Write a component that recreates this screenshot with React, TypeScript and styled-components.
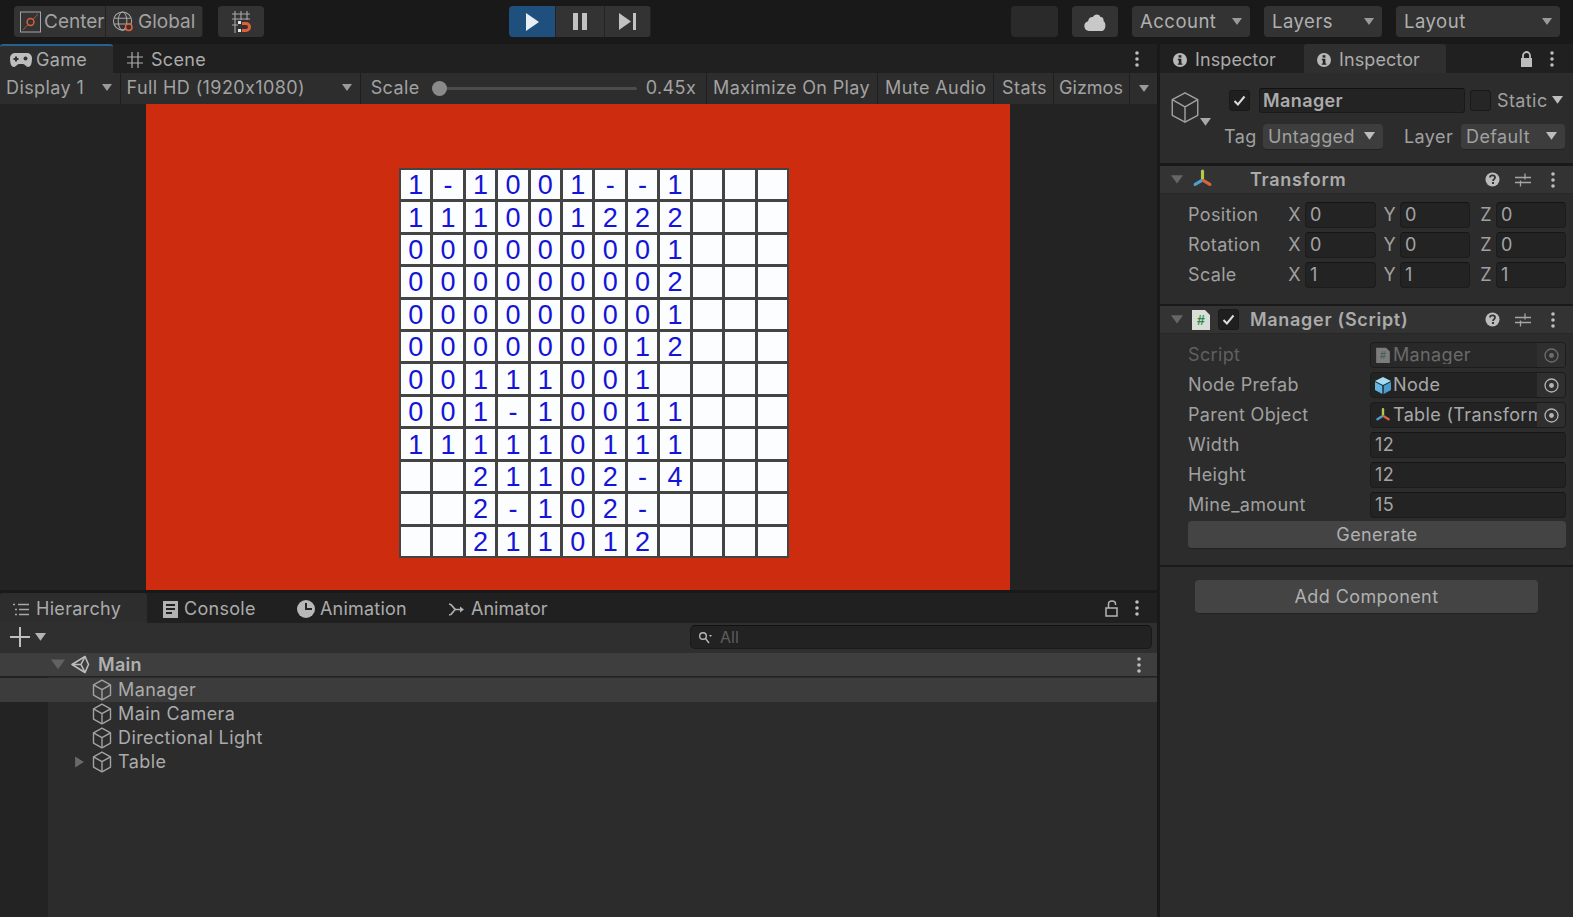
import { ReactNode } from "react";
import styled, { createGlobalStyle } from "styled-components";

const GlobalStyle = createGlobalStyle`
  html, body {
    margin: 0;
    background: #191919;
    overflow: hidden;
  }
  * {
    box-sizing: border-box;
  }
`;

const BOARD = [
  "1-1001--1",
  "111001222",
  "000000001",
  "000000002",
  "000000001",
  "000000012",
  "00111001 ",
  "001-10011",
  "111110111",
  "  21102-4",
  "  2-102- ",
  "  2110 12".replace(" 12", "12"),
];

const TREE = [
  { name: "Manager", selected: true },
  { name: "Main Camera" },
  { name: "Directional Light" },
  { name: "Table", expandable: true },
];

function Arrow({ size = 10, color = "#9a9a9a", dir = "down" }: { size?: number; color?: string; dir?: "down" | "right" }) {
  const d = dir === "down" ? "M0 1h10L5 8z" : "M1 0l8 5-8 5z";
  return (
    <svg width={size} height={size} viewBox="0 0 10 10">
      <path d={d} fill={color} />
    </svg>
  );
}

function Cube({ size = 20, color = "#a2a2a2" }: { size?: number; color?: string }) {
  return (
    <svg width={size} height={size * 1.1} viewBox="0 0 20 22" fill="none" stroke={color} strokeWidth={(1.4 * 20) / size} strokeLinejoin="round">
      <path d="M10 1.200l8.500 4.600v10.400L10 20.800l-8.500-4.600V5.800z" />
      <path d="M1.500 5.800L10 10.600l8.500-4.800M10 10.600v10.200" />
    </svg>
  );
}

function Dots({ color = "#bdbdbd" }: { color?: string }) {
  return (
    <svg width="4" height="16" viewBox="0 0 4 16">
      <circle cx="2" cy="2" r="1.800" fill={color} />
      <circle cx="2" cy="8" r="1.800" fill={color} />
      <circle cx="2" cy="14" r="1.800" fill={color} />
    </svg>
  );
}

function InfoIcon() {
  return (
    <svg width="14" height="14" viewBox="0 0 14 14">
      <circle cx="7" cy="7" r="7" fill="#b8b8b8" />
      <rect x="5.600" y="2.200" width="2.800" height="2.400" fill="#252525" />
      <path d="M4.800 5.800h3.600v4.600h1v1.400H4.800v-1.400h1V7.200h-1z" fill="#252525" />
    </svg>
  );
}

function HelpIcon() {
  return (
    <svg width="15" height="15" viewBox="0 0 15 15">
      <circle cx="7.500" cy="7.500" r="7" fill="#bcbcbc" />
      <path d="M5 5.600c0-3 5-3 5 0 0 1.800-2 1.700-2 3.300" fill="none" stroke="#333" strokeWidth="1.800" />
      <rect x="7" y="10" width="2" height="2" fill="#333" />
    </svg>
  );
}

function Sliders() {
  return (
    <svg width="16" height="16" viewBox="0 0 16 16" stroke="#a6a6a6" strokeWidth="1.300">
      <path d="M0 5.500h16M0 10.500h16M10 1.500v6M5.500 8.500v6" />
    </svg>
  );
}

function AxisIcon({ size = 20 }: { size?: number }) {
  return (
    <svg width={size} height={size} viewBox="0 0 20 20" strokeWidth="3" strokeLinecap="round" fill="none">
      <path d="M10 2v7" stroke="#b5c94a" />
      <path d="M9 11l-6 3.600" stroke="#4c9fd0" />
      <path d="M11 11l6 3.600" stroke="#d9633b" />
    </svg>
  );
}

function ScriptIcon({ dim }: { dim?: boolean }) {
  return (
    <svg width={dim ? 14 : 18} height={dim ? 16 : 21} viewBox="0 0 18 21">
      <path d="M0 1h13l5 5v15H0z" fill={dim ? "#7c7c7c" : "#d9ded9"} />
      <text x="9" y="16" fontSize="14" fontWeight="700" textAnchor="middle" fontFamily="Liberation Sans, sans-serif" fill={dim ? "#4e5e52" : "#2c8a48"}>#</text>
    </svg>
  );
}

function TargetIcon({ dim }: { dim?: boolean }) {
  const c = dim ? "#6e6e6e" : "#b4b4b4";
  return (
    <svg width="15" height="15" viewBox="0 0 15 15">
      <circle cx="7.500" cy="7.500" r="6.500" fill="none" stroke={c} strokeWidth="1.300" />
      <circle cx="7.500" cy="7.500" r="2.400" fill={c} />
    </svg>
  );
}

function Check() {
  return (
    <svg width="13" height="11" viewBox="0 0 13 11" fill="none" stroke="#dcdcdc" strokeWidth="2">
      <path d="M1.500 6l3.400 3.400L11.500 1.500" />
    </svg>
  );
}

function VectorRow({ label, x, y, z }: { label: string; x: string; y: string; z: string }) {
  return (
    <PropRow>
      <VectorLabel>{label}</VectorLabel>
      <AxisLabel $width={17}>X</AxisLabel>
      <Input $width={71}>{x}</Input>
      <AxisLabel $width={24}>Y</AxisLabel>
      <Input $width={70}>{y}</Input>
      <AxisLabel $width={26}>Z</AxisLabel>
      <Input $width={70}>{z}</Input>
    </PropRow>
  );
}

function ObjectRow({ label, icon, value, dim }: { label: string; icon: ReactNode; value: string; dim?: boolean }) {
  return (
    <PropRow>
      <ScriptLabel $dim={dim}>{label}</ScriptLabel>
      <ObjectField $dim={dim}>
        <ObjectValue>
          <IconSlot>{icon}</IconSlot>
          <ObjectText>{value}</ObjectText>
        </ObjectValue>
        <Picker>
          <TargetIcon dim={dim} />
        </Picker>
      </ObjectField>
    </PropRow>
  );
}

function NumberRow({ label, value }: { label: string; value: string }) {
  return (
    <PropRow>
      <ScriptLabel>{label}</ScriptLabel>
      <Input $width={196}>{value}</Input>
    </PropRow>
  );
}

function ComponentActions() {
  return (
    <Actions>
      <HelpIcon />
      <Sliders />
      <ActionDots>
        <Dots />
      </ActionDots>
    </Actions>
  );
}

export default function App() {
  return (
    <Page>
      <GlobalStyle />
      <Toolbar>
        <ButtonGroup>
          <ToolButton $width={92}>
            <svg width="21" height="26" viewBox="0 0 21 26" fill="none">
              <rect x="0.500" y="3" width="20" height="20" stroke="#a4a4a4" />
              <circle cx="10.500" cy="13" r="3.400" stroke="#d8603c" strokeWidth="1.500" />
              <path d="M3 21l5-5.500M13 10.500l5-5.500" stroke="#a8583c" />
            </svg>
            Center
          </ToolButton>
          <ToolButton $width={97}>
            <svg width="23" height="24" viewBox="0 0 24 24" fill="none" stroke="#a8a8a8" strokeWidth="1.100">
              <circle cx="11" cy="11" r="9.500" />
              <ellipse cx="11" cy="11" rx="4.500" ry="9.500" />
              <path d="M2 8h18M2 14h18" />
              <circle cx="17.500" cy="17.500" r="3.400" stroke="#e0603a" strokeWidth="1.600" fill="#333" />
            </svg>
            Global
          </ToolButton>
        </ButtonGroup>
        <SnapButton>
          <svg width="20" height="24" viewBox="0 0 20 24" fill="none">
            <path d="M1 4h18M1 9h18M1 15h6M4 1v22M10 1v9M16 1v9" stroke="#a8a8a8" strokeWidth="1.100" />
            <rect x="7" y="11" width="3" height="3" fill="#e8e8e8" />
            <rect x="7" y="19" width="3" height="3" fill="#e8e8e8" />
            <path d="M11 13.500h4a3.500 3.500 0 0 1 0 7h-4" stroke="#e0603a" strokeWidth="3" />
          </svg>
        </SnapButton>
        <PlayGroup>
          <PlayButton $active $width={47}>
            <svg width="14" height="18" viewBox="0 0 14 18"><path d="M1 0l13 9-13 9z" fill="#e8eef4" /></svg>
          </PlayButton>
          <PlayButton $width={49}>
            <svg width="14" height="17" viewBox="0 0 14 17"><path d="M0 0h5v17H0zM9 0h5v17H9z" fill="#c2c2c2" /></svg>
          </PlayButton>
          <PlayButton $width={46}>
            <svg width="17" height="17" viewBox="0 0 17 17"><path d="M0 0l12 8.500L0 17zM14 0h3v17h-3z" fill="#c2c2c2" /></svg>
          </PlayButton>
        </PlayGroup>
        <ToolbarRight>
          <BlankButton />
          <CloudButton>
            <svg width="22" height="18" viewBox="0 0 22 18">
              <path d="M5 18a5 5 0 0 1-1-9.800C4.600 4.800 7 3.500 9 4c1-3 6-3.500 7.500 0 2-.500 3.500 1.500 3 4 3 1.500 2.500 10-2 10z" fill="#c8c8c8" />
            </svg>
          </CloudButton>
          <DropButton $width={118}>Account<Arrow /></DropButton>
          <DropButton $width={118}>Layers<Arrow /></DropButton>
          <DropButton $width={164}>Layout<Arrow /></DropButton>
        </ToolbarRight>
      </Toolbar>

      <Workspace>
        <LeftColumn>
          <TabStrip>
            <Tab $active $blue $width={113} $pad={10} $gap={4}>
              <svg width="22" height="14" viewBox="0 0 22 14">
                <path d="M5 0h12a5 5 0 0 1 5 5c0 5-1 9-4 9-2 0-3-3-5-3H9c-2 0-3 3-5 3-3 0-4-4-4-9a5 5 0 0 1 5-5z" fill="#bdbdbd" />
                <circle cx="15.500" cy="5.500" r="2" fill="#333" />
                <path d="M5 3.500h2v1.500h1.500v2H7v1.500H5V7H3.500V5H5z" fill="#333" />
              </svg>
              Game
            </Tab>
            <Tab $width={120} $pad={14} $gap={8}>
              <svg width="16" height="16" viewBox="0 0 16 16" stroke="#adadad" strokeWidth="1.200">
                <path d="M0 5h16M0 11h16M5 0v16M11 0v16" />
              </svg>
              Scene
            </Tab>
            <TabEnd>
              <Dots />
            </TabEnd>
          </TabStrip>
          <GameBar>
            <BarCell $width={121}>Display 1<Arrow /></BarCell>
            <BarCell $width={241}>Full HD (1920x1080)<Arrow /></BarCell>
            <ScaleCell>
              Scale
              <SliderTrack>
                <SliderThumb />
              </SliderTrack>
              <span>0.45x</span>
            </ScaleCell>
            <BarCell $width={171} $spacing={0.35}>Maximize On Play</BarCell>
            <BarCell $width={116} $pad={7}>Mute Audio</BarCell>
            <BarCell $width={60} $pad={8}>Stats</BarCell>
            <BarCell $width={76} $pad={5} $spacing={0}>Gizmos</BarCell>
            <BarArrow><Arrow /></BarArrow>
          </GameBar>
          <GameView>
            <GameCanvas>
              <Board>
                {Array.from({ length: 144 }, (_, i) => (
                  <Cell key={i}>{BOARD[Math.floor(i / 12)][i % 12] ?? ""}</Cell>
                ))}
              </Board>
            </GameCanvas>
          </GameView>

          <BottomPanel>
            <BottomTabs>
              <Tab $active $width={147} $pad={13} $gap={7}>
                <svg width="16" height="13" viewBox="0 0 16 13" stroke="#a8a8a8" strokeWidth="1.300">
                  <path d="M0 1.500h2M5 1.500h11M2 6.500h2M6 6.500h10M2 11.500h2M6 11.500h10" />
                </svg>
                Hierarchy
              </Tab>
              <Tab $width={134} $pad={16} $gap={6}>
                <svg width="15" height="17" viewBox="0 0 15 17">
                  <path fillRule="evenodd" d="M0 0h15v17H0zM3 3v2h9V3zM3 7v2h9V7zM3 11v2h6v-2z" fill="#b2b2b2" />
                </svg>
                Console
              </Tab>
              <Tab $width={151} $pad={16} $gap={5} $spacing={0.2}>
                <svg width="18" height="18" viewBox="0 0 18 18">
                  <circle cx="9" cy="9" r="9" fill="#b8b8b8" />
                  <path d="M8 3h2v5h5v2H8z" fill="#262626" />
                </svg>
                Animation
              </Tab>
              <Tab $width={140} $pad={16} $gap={7} $spacing={0}>
                <svg width="16" height="13" viewBox="0 0 16 13" fill="none" stroke="#b2b2b2" strokeWidth="1.600">
                  <path d="M1 1c4 0 4 5.500 7 5.500h6M1 12c4 0 4-5.500 7-5.500" />
                  <path d="M12 3.500l4 3-4 3z" fill="#b2b2b2" stroke="none" />
                </svg>
                Animator
              </Tab>
              <TabEnd>
                <svg width="14" height="17" viewBox="0 0 14 17" fill="none" stroke="#b4b4b4" strokeWidth="1.500">
                  <rect x="1" y="8" width="11" height="8" />
                  <path d="M3.500 8V4a3.500 3 0 0 1 7 0v1" />
                </svg>
                <Dots />
              </TabEnd>
            </BottomTabs>
            <SearchBar>
              <AddMenu>
                <svg width="20" height="20" viewBox="0 0 20 20" stroke="#c0c0c0" strokeWidth="2"><path d="M0 10h20M10 0v20" /></svg>
                <Arrow size={11} color="#b4b4b4" />
              </AddMenu>
              <SearchField>
                <svg width="14" height="13" viewBox="0 0 14 13" fill="none" stroke="#b8b8b8" strokeWidth="1.400">
                  <circle cx="5" cy="5" r="3.300" />
                  <path d="M7.500 7.500l3.500 4.500" />
                  <path d="M11 4h3l-1.500 2z" fill="#b8b8b8" stroke="none" />
                </svg>
                All
              </SearchField>
            </SearchBar>
            <SceneRow>
              <SceneTitle>
                <Arrow size={14} color="#626262" />
                <svg width="19" height="19" viewBox="0 0 19 19" fill="none" stroke="#bcbcbc" strokeWidth="1.600" strokeLinejoin="round">
                  <path d="M1 9.500L14 1.500L17.500 9.500L14 17.500Z" />
                  <path d="M1 9.500H10L14 1.500M10 9.500L14 17.500" />
                </svg>
                Main
              </SceneTitle>
              <Dots />
            </SceneRow>
            <Tree>
              {TREE.map((item) => (
                <TreeRow key={item.name} $selected={item.selected}>
                  <TreeArrow>{item.expandable && <Arrow size={12} color="#6a6a6a" dir="right" />}</TreeArrow>
                  <Cube size={20} />
                  {item.name}
                </TreeRow>
              ))}
            </Tree>
          </BottomPanel>
        </LeftColumn>

        <Inspector>
          <TabStrip>
            <InspectorTab $width={144}>
              <InfoIcon />
              Inspector
            </InspectorTab>
            <InspectorTab $active $width={142}>
              <InfoIcon />
              Inspector
            </InspectorTab>
            <InspectorEnd>
              <svg width="13" height="16" viewBox="0 0 13 16">
                <path d="M3 7V4.500a3.500 3.500 0 0 1 7 0V7" fill="none" stroke="#bdbdbd" strokeWidth="1.800" />
                <rect x="1" y="7" width="11" height="9" fill="#bdbdbd" />
              </svg>
              <Dots />
            </InspectorEnd>
          </TabStrip>

          <ObjectHeader>
            <ObjectIcon>
              <Cube size={30} />
              <Arrow size={11} color="#a8a8a8" />
            </ObjectIcon>
            <ObjectRows>
              <NameRow>
                <CheckBox $checked><Check /></CheckBox>
                <NameField>Manager</NameField>
                <CheckBox />
                <StaticLabel>Static<Arrow size={11} color="#bdbdbd" /></StaticLabel>
              </NameRow>
              <TagRow>
                <TagLabel>Tag</TagLabel>
                <Select $width={120}>Untagged<Arrow size={11} color="#bdbdbd" /></Select>
                <LayerLabel>Layer</LayerLabel>
                <Select $width={104}>Default<Arrow size={11} color="#bdbdbd" /></Select>
              </TagRow>
            </ObjectRows>
          </ObjectHeader>

          <SectionHeader>
            <Arrow size={12} color="#666" />
            <HeaderIcon><AxisIcon size={21} /></HeaderIcon>
            <TransformTitle>Transform</TransformTitle>
            <ComponentActions />
          </SectionHeader>
          <SectionBody $bottom={16}>
            <VectorRow label="Position" x="0" y="0" z="0" />
            <VectorRow label="Rotation" x="0" y="0" z="0" />
            <VectorRow label="Scale" x="1" y="1" z="1" />
          </SectionBody>

          <SectionHeader>
            <Arrow size={12} color="#666" />
            <HeaderIcon><ScriptIcon /></HeaderIcon>
            <CheckBox $checked><Check /></CheckBox>
            <ScriptTitle>Manager (Script)</ScriptTitle>
            <ComponentActions />
          </SectionHeader>
          <SectionBody $bottom={16}>
            <ObjectRow dim label="Script" icon={<ScriptIcon dim />} value="Manager" />
            <ObjectRow
              label="Node Prefab"
              icon={
                <svg width="16" height="17" viewBox="0 0 16 17">
                  <path d="M8 0l8 4-8 4-8-4z" fill="#a5dcf5" />
                  <path d="M0 5l7.300 3.800V17L0 13z" fill="#62b6e2" />
                  <path d="M16 5L8.700 8.800V17L16 13z" fill="#4a9ccd" />
                </svg>
              }
              value="Node"
            />
            <ObjectRow label="Parent Object" icon={<AxisIcon size={17} />} value="Table (Transform)" />
            <NumberRow label="Width" value="12" />
            <NumberRow label="Height" value="12" />
            <NumberRow label="Mine_amount" value="15" />
            <GenerateButton>Generate</GenerateButton>
          </SectionBody>

          <AddComponentArea>
            <AddComponent>Add Component</AddComponent>
          </AddComponentArea>
        </Inspector>
      </Workspace>
    </Page>
  );
}

const Page = styled.div`
  width: 1573px;
  height: 917px;
  display: flex;
  flex-direction: column;
  background: #191919;
  color: #ababab;
  font-family: Inter, "Liberation Sans", sans-serif;
  font-size: 18px;
  line-height: 1;
  overflow: hidden;
`;

const Toolbar = styled.div`
  height: 44px;
  flex: none;
  display: flex;
  align-items: flex-start;
  padding: 6px 13px 0 14px;
`;

const ButtonGroup = styled.div`
  display: flex;
  height: 31px;
  border-radius: 4px;
  overflow: hidden;
`;

const ToolButton = styled.div<{ $width: number }>`
  width: ${(p) => p.$width}px;
  height: 31px;
  display: flex;
  align-items: center;
  gap: 3px;
  padding-left: 6px;
  background: #333333;
  border-right: 1px solid #232323;
  font-size: 19px;
  color: #a2a2a2;

  svg {
    flex: none;
  }
`;

const SnapButton = styled.div`
  width: 46px;
  height: 31px;
  margin-left: 15px;
  display: flex;
  align-items: center;
  justify-content: center;
  background: #333333;
  border-radius: 4px;
`;

const PlayGroup = styled.div`
  display: flex;
  margin-left: 245px;
  border-radius: 4px;
  overflow: hidden;
`;

const PlayButton = styled.div<{ $active?: boolean; $width: number }>`
  width: ${(p) => p.$width}px;
  height: 31px;
  display: flex;
  align-items: center;
  justify-content: center;
  background: ${(p) => (p.$active ? "#1f4f7d" : "#333333")};
  border-right: 1px solid #232323;
`;

const ToolbarRight = styled.div`
  margin-left: auto;
  display: flex;
  gap: 14px;
`;

const BlankButton = styled.div`
  width: 47px;
  height: 31px;
  background: #2a2a2a;
  border-radius: 4px;
`;

const CloudButton = styled(BlankButton)`
  width: 46px;
  background: #333333;
  display: flex;
  align-items: center;
  justify-content: center;
`;

const DropButton = styled.div<{ $width: number }>`
  width: ${(p) => p.$width}px;
  height: 31px;
  display: flex;
  align-items: center;
  justify-content: space-between;
  padding: 0 8px;
  background: #333333;
  border-radius: 4px;
  font-size: 18.500px;
  letter-spacing: 0.5px;
  color: #b0b0b0;
`;

const Workspace = styled.div`
  flex: 1;
  min-height: 0;
  display: flex;
  gap: 3px;
`;

const LeftColumn = styled.div`
  width: 1157px;
  flex: none;
  display: flex;
  flex-direction: column;
`;

const TabStrip = styled.div`
  height: 29px;
  flex: none;
  display: flex;
  align-items: stretch;
  background: #202020;
`;

const Tab = styled.div<{ $active?: boolean; $blue?: boolean; $width: number; $pad: number; $gap: number; $spacing?: number }>`
  width: ${(p) => p.$width}px;
  display: flex;
  align-items: center;
  gap: ${(p) => p.$gap}px;
  padding-left: ${(p) => p.$pad}px;
  background: ${(p) => (p.$active ? "#2d2d2d" : "transparent")};
  border-top: 2px solid ${(p) => (p.$blue ? "#25608f" : "transparent")};
  border-radius: 3px 3px 0 0;
  letter-spacing: ${(p) => p.$spacing ?? 0.3}px;
`;

const TabEnd = styled.div`
  margin-left: auto;
  display: flex;
  align-items: center;
  gap: 16px;
  padding-right: 18px;
`;

const InspectorEnd = styled(TabEnd)`
  gap: 17px;
  padding-right: 19px;
`;

const GameBar = styled.div`
  height: 31px;
  flex: none;
  display: flex;
  background: #2d2d2d;
  color: #a2a2a2;
`;

const BarCell = styled.div<{ $width: number; $pad?: number; $spacing?: number }>`
  width: ${(p) => p.$width}px;
  display: flex;
  align-items: center;
  justify-content: space-between;
  padding: 0 8px 2px ${(p) => p.$pad ?? 6}px;
  border-right: 1px solid #1e1e1e;
  letter-spacing: ${(p) => p.$spacing ?? 0.4}px;
  white-space: nowrap;
`;

const ScaleCell = styled.div`
  width: 347px;
  display: flex;
  align-items: center;
  padding: 0 10px 2px;
  border-right: 1px solid #1e1e1e;
  letter-spacing: 0.4px;
`;

const SliderTrack = styled.div`
  position: relative;
  width: 204px;
  height: 3px;
  margin: 2px 9px 0 13px;
  background: #4c4c4c;
  border-radius: 2px;
`;

const SliderThumb = styled.div`
  position: absolute;
  left: -1px;
  top: -6px;
  width: 15px;
  height: 15px;
  border-radius: 50%;
  background: #8a8a8a;
`;

const BarArrow = styled.div`
  width: 27px;
  display: flex;
  align-items: center;
  justify-content: center;
`;

const GameView = styled.div`
  height: 486px;
  flex: none;
  display: flex;
  justify-content: center;
  padding-right: 2px;
  background: #232323;
`;

const GameCanvas = styled.div`
  width: 864px;
  display: flex;
  align-items: center;
  justify-content: center;
  background: #cd2c0e;
`;

const Board = styled.div`
  width: 390px;
  height: 390px;
  margin: 32px 0 0 33px;
  display: grid;
  grid-template-columns: repeat(12, 1fr);
  grid-template-rows: repeat(12, 1fr);
  gap: 3px;
  padding: 2px;
  background: #444444;
`;

const Cell = styled.div`
  display: flex;
  align-items: center;
  justify-content: center;
  padding-top: 2px;
  background: #fcfdfe;
  color: #1414d8;
  font-family: "Liberation Sans", Arial, sans-serif;
  font-size: 27px;
`;

const BottomPanel = styled.div`
  flex: 1;
  min-height: 0;
  display: flex;
  flex-direction: column;
  margin-top: 3px;
  background: #2c2c2c;
`;

const BottomTabs = styled(TabStrip)`
  height: 30px;
`;

const SearchBar = styled.div`
  height: 30px;
  flex: none;
  display: flex;
  align-items: center;
  justify-content: space-between;
  padding: 0 5px 2px 10px;
  background: #2f2f2f;
`;

const AddMenu = styled.div`
  display: flex;
  align-items: center;
  gap: 5px;
`;

const SearchField = styled.div`
  width: 462px;
  height: 24px;
  display: flex;
  align-items: center;
  gap: 8px;
  padding-left: 7px;
  background: #222222;
  border: 1px solid #1a1a1a;
  border-top-color: #111111;
  border-radius: 5px;
  font-size: 16px;
  color: #5e5e5e;
`;

const SceneRow = styled.div`
  height: 24px;
  flex: none;
  display: flex;
  align-items: center;
  justify-content: space-between;
  padding: 0 16px 0 51px;
  background: #3e3e3e;
  border-bottom: 1px solid #222222;
`;

const SceneTitle = styled.div`
  display: flex;
  align-items: center;
  gap: 6px;
  font-weight: 600;
  letter-spacing: 0.3px;
  color: #b0b0b0;

  svg:last-of-type {
    margin-right: 2px;
  }
`;

const Tree = styled.div`
  flex: 1;
  padding-top: 1px;
  background: linear-gradient(90deg, #232323 48px, #2c2c2c 48px);
`;

const TreeRow = styled.div<{ $selected?: boolean }>`
  height: 24px;
  display: flex;
  align-items: center;
  gap: 5px;
  padding-left: 74px;
  background: ${(p) => (p.$selected ? "#3c3c3c" : "transparent")};
  letter-spacing: 0.4px;

  svg:last-of-type {
    margin-right: 1px;
  }
`;

const TreeArrow = styled.div`
  width: 12px;
  margin-right: 1px;
  display: flex;
`;

const Inspector = styled.div`
  flex: 1;
  min-width: 0;
  display: flex;
  flex-direction: column;
  background: #2c2c2c;
`;

const InspectorTab = styled.div<{ $active?: boolean; $width: number }>`
  width: ${(p) => p.$width}px;
  display: flex;
  align-items: center;
  gap: 8px;
  padding: 2px 0 0 13px;
  background: ${(p) => (p.$active ? "#2f2f2f" : "transparent")};
  border-radius: 3px 3px 0 0;
  letter-spacing: 0.1px;
`;

const ObjectHeader = styled.div`
  height: 93px;
  flex: none;
  display: flex;
  padding: 15px 8px 0 10px;
  border-bottom: 3px solid #191919;
`;

const ObjectIcon = styled.div`
  width: 54px;
  flex: none;
  display: flex;
  align-items: flex-start;
  padding-top: 3px;

  svg:last-child {
    margin-top: 26px;
  }
`;

const ObjectRows = styled.div`
  flex: 1;
  display: flex;
  flex-direction: column;
  gap: 11px;
`;

const NameRow = styled.div`
  display: flex;
  align-items: center;
  height: 25px;
  padding-left: 5px;
`;

const CheckBox = styled.div<{ $checked?: boolean }>`
  width: 21px;
  height: 21px;
  flex: none;
  display: flex;
  align-items: center;
  justify-content: center;
  background: ${(p) => (p.$checked ? "#1f1f1f" : "#262626")};
  border: 1px solid #191919;
  border-radius: 3px;
`;

const NameField = styled.div`
  width: 206px;
  height: 25px;
  margin: 0 5px 0 9px;
  display: flex;
  align-items: center;
  padding-left: 3px;
  background: #232323;
  border: 1px solid #1a1a1a;
  border-top-color: #111111;
  border-radius: 3px;
  font-weight: 600;
  letter-spacing: 0.4px;
`;

const StaticLabel = styled.div`
  display: flex;
  align-items: center;
  gap: 4px;
  margin-left: 6px;
  letter-spacing: 0.4px;
  color: #a0a0a0;
`;

const TagRow = styled.div`
  display: flex;
  align-items: center;
  height: 26px;
  color: #a0a0a0;
  letter-spacing: 0.4px;
`;

const TagLabel = styled.span`
  width: 39px;
`;

const LayerLabel = styled.span`
  margin-left: 21px;
  width: 57px;
`;

const Select = styled.div<{ $width: number }>`
  width: ${(p) => p.$width}px;
  height: 26px;
  display: flex;
  align-items: center;
  justify-content: space-between;
  padding: 0 8px 0 5px;
  background: #3d3d3d;
  border-bottom: 1px solid #222222;
  border-radius: 4px;
`;

const SectionHeader = styled.div`
  height: 28px;
  flex: none;
  display: flex;
  align-items: center;
  padding: 0 18px 0 11px;
  background: #333333;
  border-bottom: 1px solid #282828;
`;

const HeaderIcon = styled.div`
  width: 26px;
  margin-left: 9px;
  display: flex;
`;

const TransformTitle = styled.span`
  margin-left: 32px;
  font-weight: 600;
  letter-spacing: 0.7px;
`;

const ScriptTitle = styled(TransformTitle)`
  margin-left: 11px;
`;

const Actions = styled.div`
  margin-left: auto;
  display: flex;
  align-items: center;
  gap: 15px;
`;

const ActionDots = styled.span`
  display: flex;
  margin-left: 5px;
`;

const SectionBody = styled.div<{ $bottom: number }>`
  display: flex;
  flex-direction: column;
  gap: 4px;
  padding: 8px 7px ${(p) => p.$bottom}px 28px;
  border-bottom: 2px solid #191919;
`;

const PropRow = styled.div`
  height: 26px;
  flex: none;
  display: flex;
  align-items: center;
  letter-spacing: 0.35px;
  color: #a0a0a0;
`;

const VectorLabel = styled.span`
  width: 100px;
`;

const AxisLabel = styled.span<{ $width: number }>`
  width: ${(p) => p.$width}px;
  flex: none;
  padding-right: 4px;
  text-align: right;
`;

const ScriptLabel = styled.span<{ $dim?: boolean }>`
  width: 182px;
  flex: none;
  color: ${(p) => (p.$dim ? "#606060" : "#a0a0a0")};
`;

const Input = styled.div<{ $width: number }>`
  width: ${(p) => p.$width}px;
  height: 26px;
  flex: none;
  display: flex;
  align-items: center;
  padding-left: 4px;
  background: #232323;
  border: 1px solid #1c1c1c;
  border-top-color: #151515;
  border-radius: 4px;
  color: #a4a4a4;
`;

const ObjectField = styled.div<{ $dim?: boolean }>`
  width: 196px;
  height: 26px;
  flex: none;
  display: flex;
  background: ${(p) => (p.$dim ? "#292929" : "#232323")};
  border: 1px solid #1c1c1c;
  border-radius: 4px;
  overflow: hidden;
  color: ${(p) => (p.$dim ? "#6a6a6a" : "#a8a8a8")};
`;

const ObjectValue = styled.div`
  flex: 1;
  min-width: 0;
  display: flex;
  align-items: center;
  gap: 2px;
  padding-left: 4px;
`;

const IconSlot = styled.span`
  width: 16px;
  flex: none;
  display: flex;
  justify-content: center;
`;

const ObjectText = styled.span`
  white-space: nowrap;
  overflow: hidden;
`;

const Picker = styled.div`
  width: 28px;
  flex: none;
  display: flex;
  align-items: center;
  justify-content: center;
  background: #2f2f2f;
`;

const GenerateButton = styled.div`
  height: 28px;
  flex: none;
  margin-top: -1px;
  display: flex;
  align-items: center;
  justify-content: center;
  background: #444444;
  border-bottom: 1px solid #222222;
  border-radius: 4px;
  letter-spacing: 0.4px;
  color: #b0b0b0;
`;

const AddComponentArea = styled.div`
  display: flex;
  padding: 13px 0 0 35px;
`;

const AddComponent = styled(GenerateButton)`
  width: 343px;
  height: 34px;
  margin-top: 0;
`;
